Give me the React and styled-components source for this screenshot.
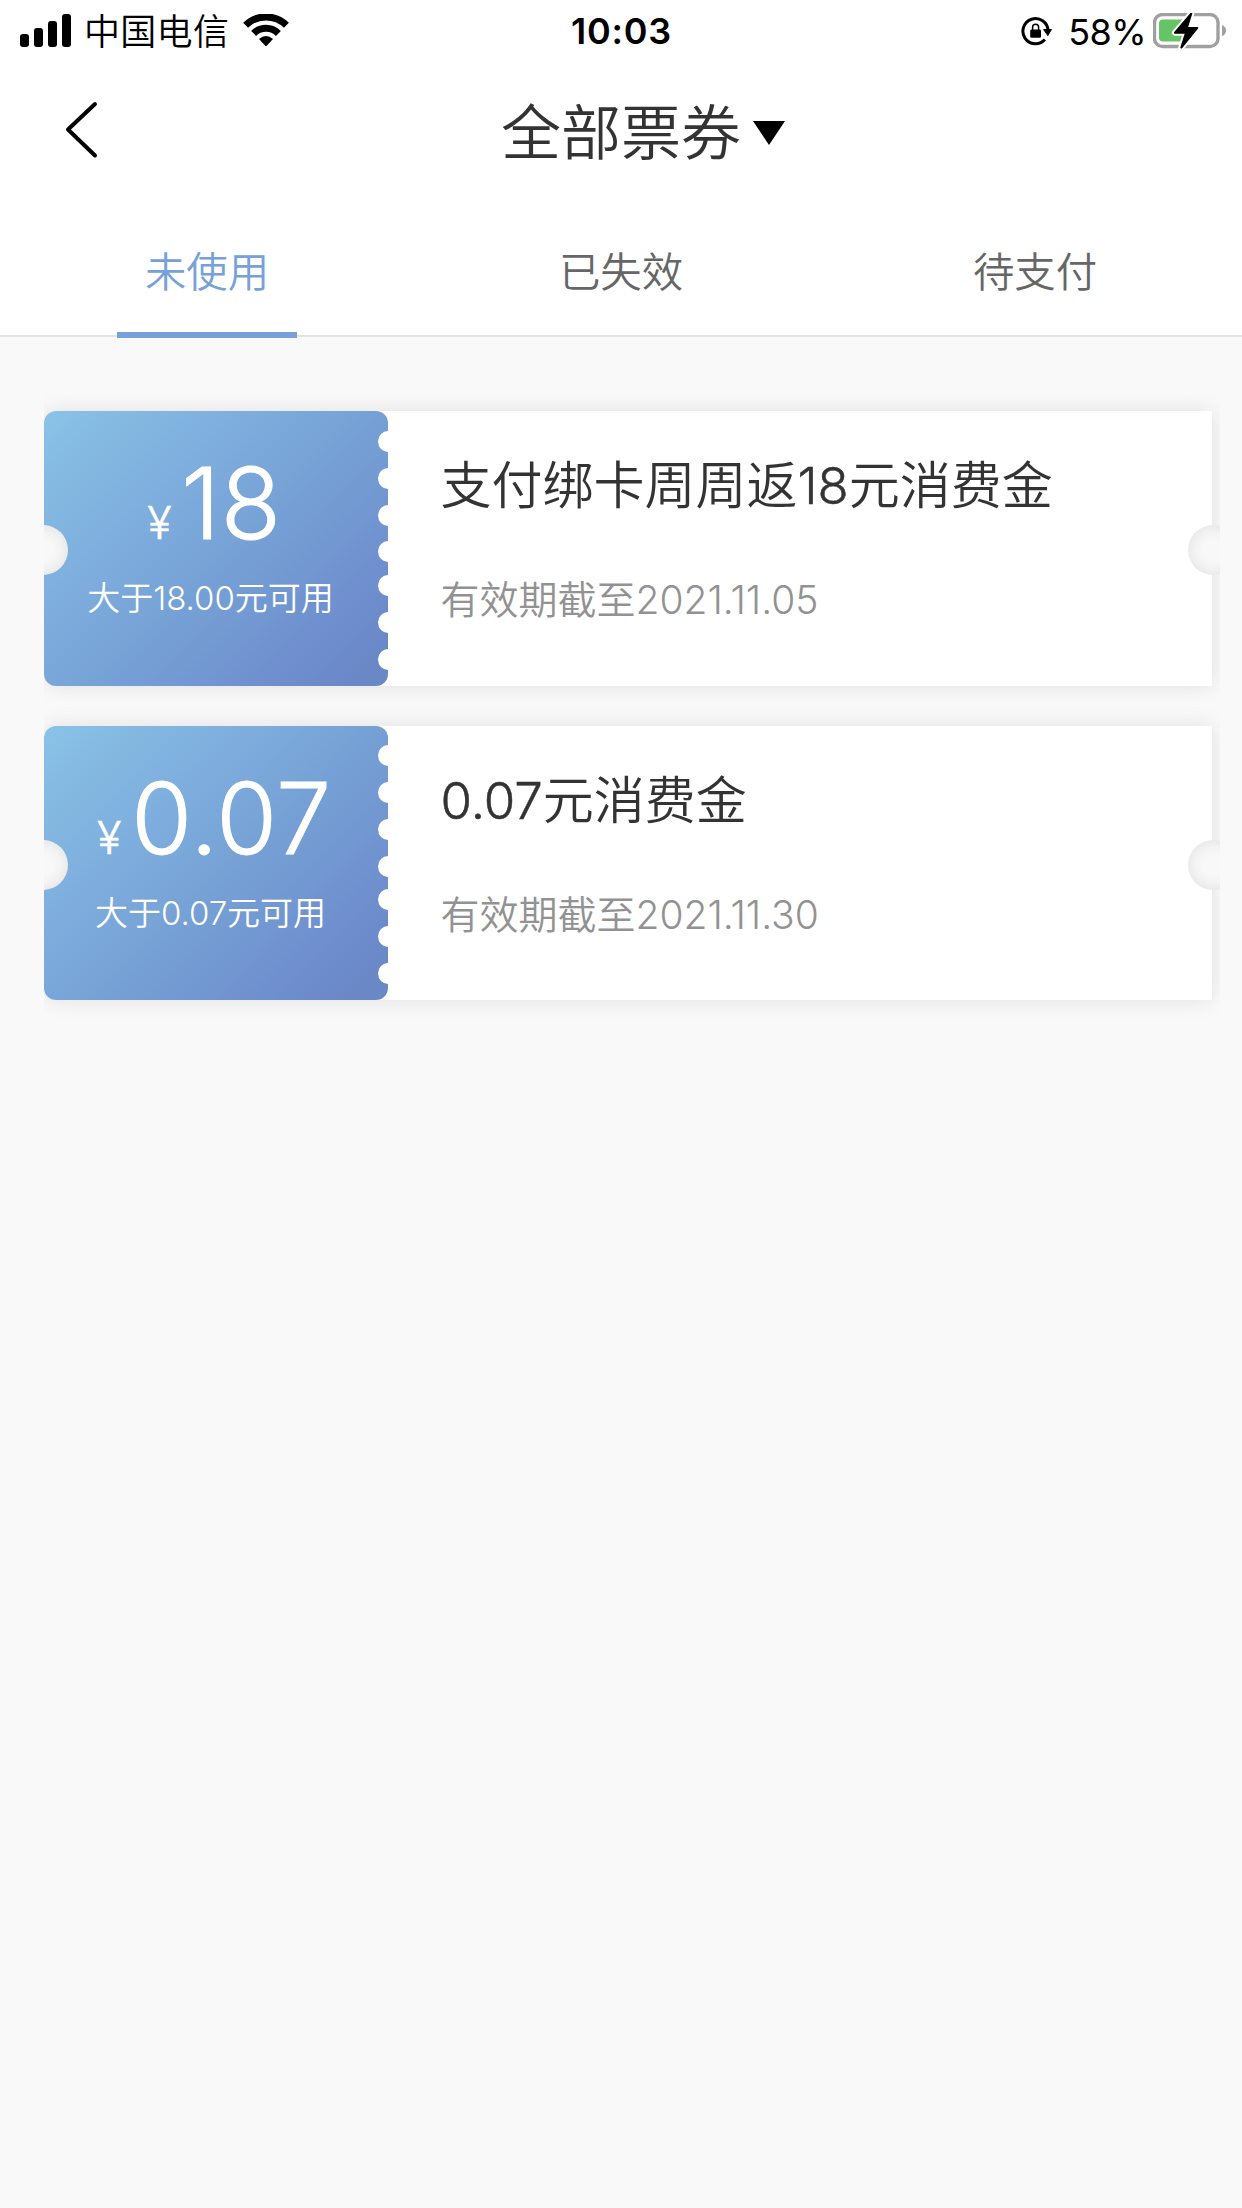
import React from "react";
import styled, { createGlobalStyle } from "styled-components";

const GlobalStyle = createGlobalStyle`
  * { box-sizing: border-box; }
  body {
    margin: 0;
    background: #f9f9f9;
    font-family: Inter, "Noto Sans CJK SC", sans-serif;
  }
`;

const Screen = styled.div`
  width: 1242px;
  min-height: 2208px;
  display: flex;
  flex-direction: column;
  background: #f9f9f9;
  white-space: nowrap;
`;

const Top = styled.header`
  background: #fff;
  height: 337px;
  border-bottom: 2px solid #e4e4e4;
  display: flex;
  flex-direction: column;
`;

const StatusBar = styled.div`
  height: 62px;
  padding: 0 15px 0 20px;
  display: grid;
  grid-template-columns: 1fr auto 1fr;
  align-items: center;
  color: #000;
  font-size: 36px;
`;

const StatusGroup = styled.div`
  display: flex;
  align-items: center;
  justify-content: ${(p) => (p.$end ? "flex-end" : "flex-start")};
`;

const Carrier = styled.span`
  margin: 0 14px 0 12px;
  padding-top: 2px;
  line-height: 60px;
  font-weight: 350;
  letter-spacing: 0.3px;
`;

const Clock = styled.span`
  margin-right: 4px;
  font-weight: 600;
  letter-spacing: 0.8px;
`;

const Percent = styled.span`
  margin: 1px 7px 0 16px;
  letter-spacing: -0.6px;
`;

const NavBar = styled.div`
  height: 138px;
  padding: 0 64px;
  display: grid;
  grid-template-columns: 140px 1fr 140px;
  align-items: center;
`;

const BackButton = styled.button`
  border: 0;
  padding: 1px 0 0;
  background: none;
  display: flex;
`;

const NavTitle = styled.h1`
  margin: 6px 0 0 44px;
  display: flex;
  justify-content: center;
  align-items: center;
  gap: 12px;
  font-size: 60px;
  line-height: 80px;
  font-weight: 350;
  color: #333;
`;

const Tabs = styled.nav`
  display: flex;
  height: 138px;
`;

const Tab = styled.button`
  flex: 1;
  border: 0;
  padding: 43px 0 0;
  background: none;
  display: flex;
  flex-direction: column;
  align-items: center;
  justify-content: space-between;
  font: 350 41.4px/60px Inter, "Noto Sans CJK SC", sans-serif;
  color: ${(p) => (p.$active ? "#76a2d9" : "#666")};

  &::after {
    content: "";
    width: 180px;
    height: 6px;
    margin-bottom: -3px;
    background: ${(p) => (p.$active ? "#76a2d9" : "transparent")};
  }
`;

const TicketList = styled.main`
  padding: 74px 30px 0 44px;
  display: flex;
  flex-direction: column;
  gap: 40.2px;
`;

const Ticket = styled.article`
  position: relative;
  width: 1168px;
  height: 274.5px;
  display: flex;
  background: #fff;
  border-radius: 12px 0 0 12px;
  box-shadow: 0 0 22px rgba(0, 0, 0, 0.1);
  clip-path: inset(-24px -8px -24px 0);
`;

const Stub = styled.div`
  position: relative;
  width: 344px;
  padding: 38px 10px 0 0;
  border-radius: 12px;
  overflow: hidden;
  color: #fff;
  background: linear-gradient(135deg, #8ac3e8 0%, #84b9e1 14%, #7eaede 32%, #749dd3 60%, #6f8fce 80%, #6a87c6 94%);
  display: flex;
  flex-direction: column;
  align-items: center;
`;

const Tooth = styled.i`
  position: absolute;
  right: -10.5px;
  top: ${(p) => p.$y - 10.5}px;
  width: 21px;
  height: 21px;
  border-radius: 50%;
  background: #fff;
`;

const Notch = styled.i`
  position: absolute;
  top: 114px;
  ${(p) => p.$side}: -26px;
  width: 50px;
  height: 50px;
  border-radius: 50%;
  background: #f8f8f8;
  box-shadow: inset 0 0 16px rgba(0, 0, 0, 0.1);
`;

const Amount = styled.div`
  display: flex;
  align-items: baseline;
  margin-left: 7px;
  font-weight: 340;
  font-size: 98.5px;
  line-height: 110px;
  letter-spacing: 0.8px;
  -webkit-text-stroke: 1px #fff;
`;

const Currency = styled.span`
  font-size: 45px;
  margin-right: 9px;
  -webkit-text-stroke-width: 0.5px;
`;

const Condition = styled.div`
  margin: -4px 1px 0 0;
  font-size: 33px;
  line-height: 48px;
  font-weight: 350;
`;

const Detail = styled.div`
  padding: 43px 0 0 52.5px;
  display: flex;
  flex-direction: column;
  gap: 54px;
`;

const TicketName = styled.h2`
  margin: 0;
  font-size: 51px;
  line-height: 64px;
  font-weight: 350;
  color: #333;
`;

const Digits = styled.span`
  -webkit-text-stroke: 0.5px #333;
`;

const Expiry = styled.p`
  margin: 0;
  font-size: 39px;
  line-height: 56px;
  font-weight: 350;
  color: #929292;
`;

const teeth = [30, 67.3, 104, 140.7, 174.3, 211, 248];

const tickets = [
  { amount: "18", prefix: "支付绑卡周周返", min: "18.00", until: "2021.11.05" },
  { amount: "0.07", prefix: "", min: "0.07", until: "2021.11.30" },
];

function SignalIcon() {
  return (
    <svg width="52" height="34" viewBox="0 0 52 34">
      <rect x="0" y="20" width="9" height="13" rx="3" />
      <rect x="14" y="14" width="9" height="19" rx="3" />
      <rect x="28" y="7" width="9" height="26" rx="3" />
      <rect x="42" y="0" width="9" height="33" rx="3" />
    </svg>
  );
}

function WifiIcon() {
  return (
    <svg width="46" height="34" viewBox="0 1 46 34">
      <g fill="none" stroke="#000" strokeWidth="7">
        <path d="M2.6 12.2A29.3 29.3 0 0 1 43.4 12.2" />
        <path d="M10.6 20.4A17.7 17.7 0 0 1 35.4 20.4" />
      </g>
      <path d="M16 26Q23 20 30 26L24 32.4Q23 33.4 22 32.4Z" />
    </svg>
  );
}

function RotationLockIcon() {
  return (
    <svg width="32" height="30" viewBox="-1 -1 32 30">
      <path d="M23.9 22.6A12.6 12.6 0 1 1 27.1 13.5" fill="none" stroke="#000" strokeWidth="3" />
      <path d="M22.6 12.5H30.4L26.8 18.6Z" stroke="#000" strokeWidth="1" strokeLinejoin="round" />
      <rect x="9.2" y="12.6" width="10.8" height="8.2" rx="1.4" />
      <path d="M11.6 13.5V10.2a3 3 0 0 1 6 0v3" fill="none" stroke="#000" strokeWidth="1.5" />
    </svg>
  );
}

function BatteryIcon() {
  const bolt = "M38.3 0L22 19.2H33L28.3 34L44.3 14.4H33.8Z";
  return (
    <svg width="74" height="36" viewBox="0 0.5 74 36">
      <rect x="1.5" y="2" width="63.5" height="32" rx="8" fill="none" stroke="#a0a0a2" strokeWidth="3.4" />
      <path d="M69 12.4c5.4 1.6 5.4 9.6 0 11.2Z" fill="#a0a0a2" />
      <path d="M10 7H36V29H10a4 4 0 0 1-4-4V11a4 4 0 0 1 4-4Z" fill="#64c466" />
      <path d="M33 19L28 30H37V18Z" fill="#fff" />
      <g transform="translate(0 1)">
        <path d={bolt} fill="#fff" stroke="#fff" strokeWidth="6" strokeLinejoin="round" />
        <path d={bolt} stroke="#000" strokeWidth="2" strokeLinejoin="round" />
      </g>
    </svg>
  );
}

export default function App() {
  return (
    <Screen>
      <GlobalStyle />
      <Top>
        <StatusBar>
          <StatusGroup>
            <SignalIcon />
            <Carrier>中国电信</Carrier>
            <WifiIcon />
          </StatusGroup>
          <Clock>10:03</Clock>
          <StatusGroup $end>
            <RotationLockIcon />
            <Percent>58%</Percent>
            <BatteryIcon />
          </StatusGroup>
        </StatusBar>
        <NavBar>
          <BackButton aria-label="返回">
            <svg width="36" height="60" viewBox="0 0 36 60" fill="none" stroke="#000" strokeWidth="4" strokeLinecap="round" strokeLinejoin="round">
              <path d="M31 3L4 28.5L31 54.5" />
            </svg>
          </BackButton>
          <NavTitle>
            全部票券
            <svg width="32" height="24" viewBox="0 0 32 24">
              <path d="M0 0H32L16 24Z" fill="#000" />
            </svg>
          </NavTitle>
        </NavBar>
        <Tabs>
          <Tab $active>未使用</Tab>
          <Tab>已失效</Tab>
          <Tab>待支付</Tab>
        </Tabs>
      </Top>
      <TicketList>
        {tickets.map((t) => (
          <Ticket key={t.amount}>
            <Stub>
              <Amount>
                <Currency>¥</Currency>
                {t.amount}
              </Amount>
              <Condition>大于{t.min}元可用</Condition>
              {teeth.map((y) => (
                <Tooth key={y} $y={y} />
              ))}
            </Stub>
            <Detail>
              <TicketName>
                {t.prefix}
                <Digits>{t.amount}</Digits>
                元消费金
              </TicketName>
              <Expiry>有效期截至{t.until}</Expiry>
            </Detail>
            <Notch $side="left" />
            <Notch $side="right" />
          </Ticket>
        ))}
      </TicketList>
    </Screen>
  );
}
